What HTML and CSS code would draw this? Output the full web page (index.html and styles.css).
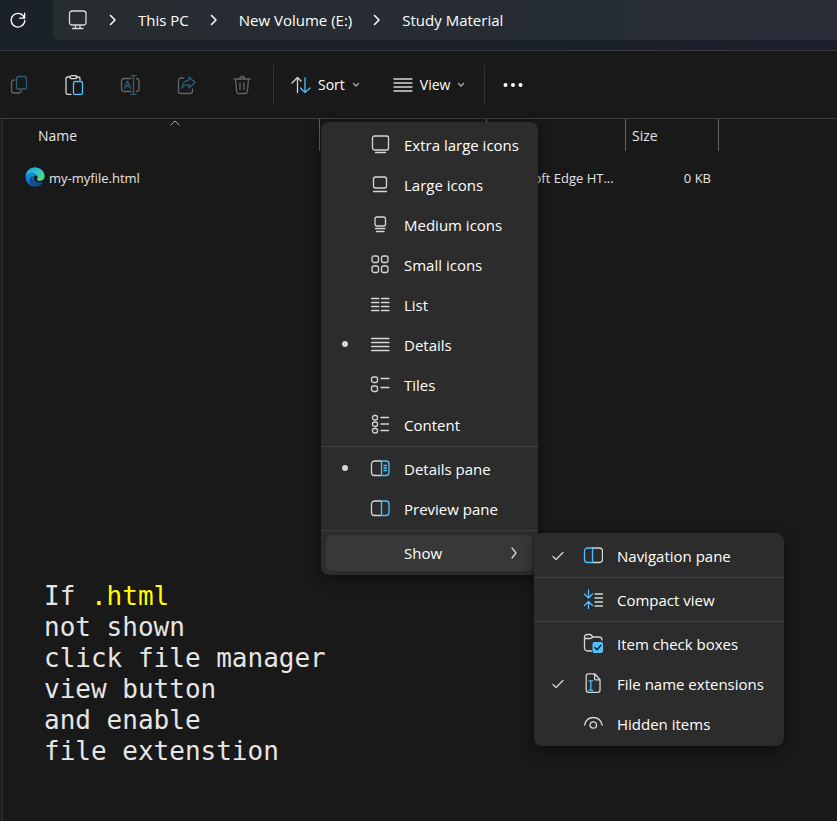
FILE: index.html
```html
<!DOCTYPE html>
<html lang="en">
<head>
<meta charset="utf-8">
<title>Study Material</title>
<link rel="stylesheet" href="styles.css">
</head>
<body>
<div class="window">
  <header class="titlebar">
    <button class="refresh" aria-label="Refresh">
      <svg width="18" height="18" viewBox="0 0 18 18"><path d="M15.500 7.200A6.800 6.800 0 1 0 15.800 9.500M15.600 2.200v5h-5"/></svg>
    </button>
    <nav class="address" aria-label="Location">
      <svg class="pc" width="20" height="20" viewBox="0 0 20 20"><rect x="1.500" y="1" width="16.500" height="14" rx="2.500"/><path d="M7.500 15.500v3M12 15.500v3M4.500 18.500h10.500"/></svg>
      <svg class="crumb-arrow" width="8" height="12" viewBox="0 0 8 12"><path d="M1.500 1.500L6 6l-4.500 4.500"/></svg>
      <a href="#">This PC</a>
      <svg class="crumb-arrow" width="8" height="12" viewBox="0 0 8 12"><path d="M1.500 1.500L6 6l-4.500 4.500"/></svg>
      <a href="#">New Volume (E:)</a>
      <svg class="crumb-arrow" width="8" height="12" viewBox="0 0 8 12"><path d="M1.500 1.500L6 6l-4.500 4.500"/></svg>
      <a href="#">Study Material</a>
    </nav>
  </header>

  <div class="toolbar" role="toolbar">
    <button class="tool dim" aria-label="Copy"><svg width="20" height="20" viewBox="0 0 20 20"><path d="M6.500 5H6a2.500 2.500 0 0 0-2.500 2.500v8A2.500 2.500 0 0 0 6 18h4.500a2.500 2.500 0 0 0 2.500-2.500"/><rect class="blue" x="8.500" y="1.500" width="10" height="12.500" rx="2"/></svg></button>
    <button class="tool" aria-label="Paste"><svg width="20" height="20" viewBox="0 0 20 20"><path d="M7 19.300H3.500a1.500 1.500 0 0 1-1.500-1.500V3.500A1.500 1.500 0 0 1 3.500 2H6M12 2h2.500A1.500 1.500 0 0 1 16 3.500V5"/><rect x="6" y=".7" width="7" height="3" rx="1.500"/><rect class="blue" x="9.500" y="6.500" width="9" height="13" rx="1.500"/></svg></button>
    <button class="tool dim" aria-label="Rename"><svg width="20" height="20" viewBox="0 0 20 20"><path d="M11 3.500H4A2.500 2.500 0 0 0 1.500 6v8A2.500 2.500 0 0 0 4 16.500h7M16.500 3.500A2.500 2.500 0 0 1 19 6v8a2.500 2.500 0 0 1-2.500 2.500"/><path class="blue" d="M4.500 13.500L7.500 6l3 7.500M5.500 11h4M13.500 1v18M11 .7h5M11 19.300h5"/></svg></button>
    <button class="tool dim" aria-label="Share"><svg width="20" height="20" viewBox="0 0 20 20"><path d="M7.500 3H5a2.500 2.500 0 0 0-2.500 2.500V16A2.500 2.500 0 0 0 5 18.500h9a2.500 2.500 0 0 0 2.500-2.500v-2"/><path class="blue" d="M13 2l6 5.500-6 5.500V9.700c-3.500-.2-5.500 1.100-7 3.300.2-4 2.500-7.400 7-7.800z"/></svg></button>
    <button class="tool dim" aria-label="Delete"><svg width="20" height="20" viewBox="0 0 20 20"><path d="M2 4h16M7.500 4a2.500 2.500 0 0 1 5 0M3.500 4l1.200 13a1.800 1.800 0 0 0 1.800 1.500h7a1.800 1.800 0 0 0 1.800-1.500L16.500 4M8 8v6.500M12 8v6.500"/></svg></button>
    <span class="rule"></span>
    <button class="tool-text sort"><svg width="20" height="20" viewBox="0 0 20 20"><path d="M6.500 17.500V2.500M1 8l5.500-5.500L10 6"/><path class="blue" d="M14 3v14.500M9.500 13l4.500 4.500L19 13"/></svg>Sort<svg class="down" width="8" height="6" viewBox="0 0 8 6"><path d="M1.500 1.500L4 4l2.500-2.500"/></svg></button>
    <button class="tool-text view" aria-haspopup="menu" aria-expanded="true"><svg width="20" height="20" viewBox="0 0 20 20"><path d="M1 4h18M1 8h18M1 12h18M1 16h18"/></svg>View<svg class="down" width="8" height="6" viewBox="0 0 8 6"><path d="M1.500 1.500L4 4l2.500-2.500"/></svg></button>
    <span class="rule"></span>
    <button class="more" aria-label="See more"><svg width="20" height="6" viewBox="0 0 20 6"><circle cx="2.500" cy="3" r="2"/><circle cx="10" cy="3" r="2"/><circle cx="17.500" cy="3" r="2"/></svg></button>
  </div>

  <main class="content">
    <table class="files">
      <colgroup><col class="c-name"><col class="c-date"><col class="c-type"><col class="c-size"></colgroup>
      <thead>
        <tr>
          <th>Name<svg class="sorted" width="10" height="6" viewBox="0 0 10 6"><path d="M.8 5L5 1l4.200 4"/></svg></th>
          <th></th>
          <th></th>
          <th>Size</th>
        </tr>
      </thead>
      <tbody>
        <tr>
          <td><span class="file"><svg width="20" height="20" viewBox="0 0 20 20">
            <defs>
              <linearGradient id="top" x1="0" y1="0" x2="1" y2="1"><stop offset="0" stop-color="#1b9fe0"/><stop offset=".5" stop-color="#2fc6c8"/><stop offset="1" stop-color="#6be04a"/></linearGradient>
              <linearGradient id="side" x1="0" y1="0" x2="0" y2="1"><stop offset="0" stop-color="#1aa5e8"/><stop offset="1" stop-color="#0c62c4"/></linearGradient>
            </defs>
            <circle class="fill-side" cx="10" cy="10" r="9.500"/>
            <path class="fill-deep" d="M7.500 11c0 4 4.500 6.500 10.800 4C15 20.500 8 20.600 5.600 16.500 3.800 13 5.800 9.200 9 8.400 8 9 7.500 10 7.500 11z"/>
            <path class="fill-top" d="M.6 9C1.200 3.800 5.200.4 10 .4c5.500 0 9.600 4.200 9.600 8.700 0 3-2.400 4.800-5 4.800-2 0-3-.7-3-1.300 0-.5 1-1 1-2.600C12.600 7.500 9.800 5.500 7 5.500 4 5.500 1.700 7 .6 9z"/>
            <path class="fill-hole" d="M11.600 12.600c0 .8 1.600 1.700 3.600 1.400 1.600-.2 2.700-.8 3.500-1.700l.5 1.400c-.2.800-.6 1.200-1.200 1.500-2.800.8-6.600.7-8.400-1.500-1.300-1.700-1-4.200.6-5.200 1.700.2 2.500 1.300 2.400 2.300-.1.800-1 1.200-1 1.800z"/>
          </svg>my-myfile.html</span></td>
          <td></td>
          <td>Microsoft Edge HT...</td>
          <td class="num">0 KB</td>
        </tr>
      </tbody>
    </table>
    <p class="note">If <mark>.html</mark><br>not shown<br>click file manager<br>view button<br>and enable<br>file extenstion</p>
  </main>

  <ul class="menu view-menu" role="menu">
    <li><button class="item"><i></i><svg width="20" height="20" viewBox="0 0 20 20"><rect x="2.500" y="2" width="16" height="14" rx="2"/><path d="M5.500 18.500h10"/></svg>Extra large icons</button></li>
    <li><button class="item"><i></i><svg width="20" height="20" viewBox="0 0 20 20"><rect x="3.500" y="3" width="13" height="11" rx="2"/><path d="M3.500 17.500h13"/></svg>Large icons</button></li>
    <li><button class="item"><i></i><svg width="20" height="20" viewBox="0 0 20 20"><rect x="5" y="3" width="10.500" height="9" rx="2"/><path d="M5.500 14.500h9.500M6.500 17.500h7.500"/></svg>Medium icons</button></li>
    <li><button class="item"><i></i><svg width="20" height="20" viewBox="0 0 20 20"><rect x="2" y="2" width="6.500" height="6.500" rx="2"/><rect x="11.500" y="2" width="6.500" height="6.500" rx="2"/><rect x="2" y="12" width="6.500" height="6.500" rx="2"/><rect x="11.500" y="12" width="6.500" height="6.500" rx="2"/></svg>Small icons</button></li>
    <li><button class="item"><i></i><svg width="20" height="20" viewBox="0 0 20 20"><path d="M1.500 4.500h7.500M1.500 8.500h7.500M1.500 12.500h7.500M1.500 16.500h7.500M11.500 4.500h7.500M11.500 8.500h7.500M11.500 12.500h7.500M11.500 16.500h7.500"/></svg>List</button></li>
    <li><button class="item"><i class="dot"></i><svg width="20" height="20" viewBox="0 0 20 20"><path d="M1.500 4.500H19M1.500 8.500H19M1.500 12.500H19M1.500 16.500H19"/></svg>Details</button></li>
    <li><button class="item"><i></i><svg width="20" height="20" viewBox="0 0 20 20"><rect x="1.500" y="3" width="6" height="5.500" rx="2"/><rect x="1.500" y="12" width="6" height="5.500" rx="2"/><path d="M11 4.500h8M11 13.500h8"/></svg>Tiles</button></li>
    <li><button class="item"><i></i><svg width="20" height="20" viewBox="0 0 20 20"><rect x="2.500" y="1.500" width="5" height="4.500" rx="2"/><rect x="2.500" y="8" width="5" height="4.500" rx="2"/><rect x="2.500" y="14.500" width="5" height="4.500" rx="2"/><path d="M11 3.500h7.500M11 10h7.500M11 16.500h7.500"/></svg>Content</button></li>
    <li class="sep" role="separator"></li>
    <li><button class="item"><i class="dot"></i><svg width="20" height="20" viewBox="0 0 20 20"><path d="M11 3H4.500a3 3 0 0 0-3 3v8.500a3 3 0 0 0 3 3H11"/><path class="blue" d="M11.500 3H16a3 3 0 0 1 3 3v8.500a3 3 0 0 1-3 3h-4.500zM14 7.500h2.500M14 10h2.500M14 12.500h2.500"/></svg>Details pane</button></li>
    <li><button class="item"><i></i><svg width="20" height="20" viewBox="0 0 20 20"><path d="M11 3H4.500a3 3 0 0 0-3 3v8.500a3 3 0 0 0 3 3H11"/><path class="blue" d="M11.500 3H16a3 3 0 0 1 3 3v8.500a3 3 0 0 1-3 3h-4.500z"/></svg>Preview pane</button></li>
    <li class="sep" role="separator"></li>
    <li class="parent"><button class="item open" aria-haspopup="menu" aria-expanded="true"><i></i><b></b>Show<svg class="next" width="8" height="12" viewBox="0 0 8 12"><path d="M2 1l4 5-4 5"/></svg></button>
      <ul class="menu show-menu" role="menu">
        <li><button class="item"><i class="check"><svg width="14" height="10" viewBox="0 0 14 10"><path d="M2 5.500L5 8.500 12 1.500"/></svg></i><svg width="20" height="20" viewBox="0 0 20 20"><path d="M9.500 3H16.500a3 3 0 0 1 3 3v8.500a3 3 0 0 1-3 3H9.500"/><path class="blue" d="M9.500 3H4.500a3 3 0 0 0-3 3v8.500a3 3 0 0 0 3 3h5z"/></svg>Navigation pane</button></li>
        <li class="sep" role="separator"></li>
        <li><button class="item"><i></i><svg width="20" height="20" viewBox="0 0 20 20"><path d="M12 5h7.500M12 9h7.500M12 13h7.500M12 17h7.500"/><path class="blue" d="M5.500 1V9M1.500 5l4 4 4-4M5.500 20V12.500M1.500 16.500l4-4 4 4"/></svg>Compact view</button></li>
        <li class="sep" role="separator"></li>
        <li><button class="item"><i></i><svg width="20" height="20" viewBox="0 0 20 20"><path d="M8.500 18H4.500a3 3 0 0 1-3-3V4A2.500 2.500 0 0 1 4 1.500h3c1.500 0 2 2.500 3.500 2.500H16a3 3 0 0 1 3 3M1.500 5.500H7c1.500 0 2-1.500 3.500-1.500"/><rect class="tick-box" x="9.500" y="9" width="10.500" height="11" rx="2"/><path class="tick" d="M11.800 14.500l2.200 2.300 4-4.600"/></svg>Item check boxes</button></li>
        <li><button class="item"><i class="check"><svg width="14" height="10" viewBox="0 0 14 10"><path d="M2 5.500L5 8.500 12 1.500"/></svg></i><svg width="20" height="20" viewBox="0 0 20 20"><path d="M5.500.8h6.300l5.200 6V17a2.300 2.300 0 0 1-2.300 2.300H5.500A2.300 2.300 0 0 1 3.200 17V3A2.300 2.300 0 0 1 5.500.8zM11.600 1v4.700a1.200 1.200 0 0 0 1.200 1.200H17"/><path class="blue" d="M7.800 8v9M6 7.800h3.600M6 17.200h3.600"/></svg>File name extensions</button></li>
        <li><button class="item"><i></i><svg width="20" height="20" viewBox="0 0 20 20"><path d="M1.500 12C2.700 7.200 6 4.500 10.300 4.500S18 7.200 19.200 12"/><circle cx="10.300" cy="12" r="3.200"/></svg>Hidden items</button></li>
      </ul>
    </li>
  </ul>
</div>
</body>
</html>
```
FILE: styles.css
```css
* { box-sizing: border-box; }

body {
  margin: 0;
  background: #191919;
  color: #fff;
  font: 14px/20px "Open Sans", "Noto Sans", sans-serif;
}

button {
  margin: 0;
  padding: 0;
  border: 0;
  background: none;
  color: inherit;
  font: inherit;
}

a { color: inherit; text-decoration: none; }

svg {
  flex: none;
  fill: none;
  stroke: #d6d6d6;
  stroke-width: 1.3;
  stroke-linecap: round;
  stroke-linejoin: round;
}

.blue { stroke: #4cc2ff; }

.window {
  position: relative;
  display: flex;
  flex-direction: column;
  min-height: 100vh;
  overflow: hidden;
}

.titlebar {
  display: flex;
  height: 51px;
  border-bottom: 1px solid #3a3a3a;
  background: linear-gradient(90deg, #1a212a, #1a2128 60%, #1b1e2d);
}

.refresh {
  display: flex;
  align-items: center;
  width: 53px;
  height: 40px;
  padding-left: 9px;
}

.refresh svg { stroke: #fff; }

.address {
  display: flex;
  flex: 1;
  align-items: center;
  gap: 21px;
  height: 40px;
  padding-left: 15px;
  border-radius: 0 0 0 6px;
  background: linear-gradient(90deg, #262d30, #262c33 60%, #282c38);
  font-size: 15px;
}

.crumb-arrow { stroke: #fff; stroke-width: 1.5; }

.toolbar {
  display: flex;
  align-items: center;
  height: 68px;
  border-bottom: 1px solid #3a3a3a;
}

.tool {
  display: flex;
  justify-content: center;
  width: 56px;
}

.tool:first-child { margin-left: -10px; }
.dim svg { opacity: .4; }

.rule {
  width: 1px;
  height: 40px;
  margin-left: 3px;
  background: #333;
}

.tool-text {
  display: flex;
  align-items: center;
  gap: 7px;
}

.sort { margin-left: 17px; }
.view { margin: 0 16px 0 33px; }
.down { stroke: #aaa; }
.more { display: flex; margin-left: 18px; }
.more svg { fill: #fff; stroke: none; }

.content {
  flex: 1;
  margin-left: 1px;
  border-left: 2px solid #2a2a2a;
}

.files {
  width: 716px;
  border-collapse: separate;
  border-spacing: 0;
  table-layout: fixed;
  color: #e4e4e4;
}

.c-name { width: 317px; }
.c-date { width: 167px; }
.c-type { width: 139px; }
.c-size { width: 93px; }

th {
  position: relative;
  height: 32px;
  padding: 2px 6px 0;
  border-right: 1px solid #636363;
  font-weight: 400;
  text-align: left;
}

th:first-child { padding-left: 35px; }

.sorted {
  position: absolute;
  top: 1px;
  left: 50%;
  margin-left: 9px;
  stroke: #aaa;
  stroke-width: 1;
}

td {
  height: 54px;
  padding: 0 8px 0 6px;
  font-size: 13px;
  white-space: nowrap;
}

td:first-child { padding-left: 22px; }
.num { text-align: right; }
.file { display: flex; align-items: center; gap: 4px; }
.file svg { margin-top: -2px; stroke: none; }
.fill-side { fill: url(#side); }
.fill-deep { fill: #114a8b; }
.fill-top { fill: url(#top); }
.fill-hole { fill: #191919; }

.note {
  margin: 376px 0 0 41px;
  color: #e6e6e6;
  font: 26px/31px "DejaVu Sans Mono", monospace;
}

.note mark { background: none; color: #ff0; }

.menu {
  position: absolute;
  margin: 0;
  padding: 3px 0 2px;
  border-radius: 8px;
  background: #2c2c2c;
  box-shadow: 0 4px 14px rgba(0, 0, 0, .45);
  font-size: 15px;
  list-style: none;
}

.view-menu { top: 122px; left: 321px; width: 217px; }
.show-menu { top: 0; left: 213px; width: 250px; }
.parent { position: relative; display: flex; }

.item {
  display: flex;
  align-items: center;
  width: 100%;
  height: 40px;
  padding-left: 17px;
  text-align: left;
  white-space: nowrap;
}

.item > i {
  display: flex;
  flex: none;
  justify-content: center;
  width: 14px;
  margin-right: 18px;
}

.item > svg:not(.next),
.item > b { width: 20px; margin: -3px 14px 0 0; }

.dot::before {
  content: "";
  width: 6px;
  height: 6px;
  margin-top: -2px;
  border-radius: 50%;
  background: #d6d6d6;
}

.open {
  width: calc(100% - 10px);
  height: 36px;
  margin: 2px 5px;
  padding: 0 15px 0 12px;
  border-radius: 6px;
  background: #383838;
}

.next { margin-left: auto; }

.sep {
  height: 1px;
  margin: 1px 0 2px;
  background: #404040;
}

.tick-box { fill: #4cc2ff; stroke: none; }
.tick { stroke: #111; }
```
